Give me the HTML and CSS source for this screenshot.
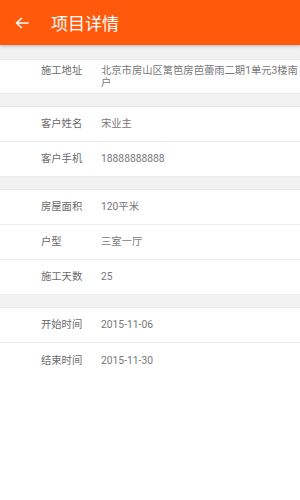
FILE: index.html
```html
<!DOCTYPE html>
<html lang="zh">
<head>
  <meta charset="UTF-8">
  <meta name="viewport" content="width=device-width, initial-scale=1.0">
  <title>项目详情</title>
  <link rel="stylesheet" href="styles.css">
</head>
<body>
  <header class="bar">
    <svg class="back" width="14" height="12" viewBox="0 0 14 12">
      <path d="M13 6H1.5M6.5 1.2L1.5 6l5 4.8" fill="none" stroke="#fff" stroke-width="1.5" stroke-linecap="round" stroke-linejoin="round"/>
    </svg>
    <h1>项目详情</h1>
  </header>

  <main>
    <div class="gap top"></div>
    <section class="group">
      <div class="row multi"><span class="label">施工地址</span><span class="value">北京市房山区篱笆房芭蕾雨二期1单元3楼南户</span></div>
    </section>

    <div class="gap"></div>
    <section class="group">
      <div class="row"><span class="label">客户姓名</span><span class="value">宋业主</span></div>
      <div class="row"><span class="label">客户手机</span><span class="value">18888888888</span></div>
    </section>

    <div class="gap"></div>
    <section class="group">
      <div class="row"><span class="label">房屋面积</span><span class="value">120平米</span></div>
      <div class="row"><span class="label">户型</span><span class="value">三室一厅</span></div>
      <div class="row"><span class="label">施工天数</span><span class="value">25</span></div>
    </section>

    <div class="gap"></div>
    <section class="group">
      <div class="row"><span class="label">开始时间</span><span class="value">2015-11-06</span></div>
      <div class="row last"><span class="label">结束时间</span><span class="value">2015-11-30</span></div>
    </section>
  </main>
</body>
</html>
```

FILE: styles.css
```css
*, *::before, *::after { box-sizing: border-box; margin: 0; padding: 0; }
body { font-family: Roboto, "Noto Sans CJK SC", sans-serif; background: #fff; color: #666; width: 300px; }

.bar { height: 45px; background: #ff5a0c; display: flex; align-items: center; padding-left: 15px; position: relative; z-index: 1; box-shadow: 0 1px 3px rgba(0,0,0,0.25); }
.back { display: block; margin-top: 1px; }
.bar h1 { color: #fff; font-size: 17px; font-weight: normal; margin-left: 22px; }

.gap { height: 13px; background: #f2f2f2; border-bottom: 1px solid #e8e8e8; }
.gap.top { height: 15px; background: #f0f0f0; }

.row { display: flex; align-items: center; min-height: 35px; border-bottom: 1px solid #ececec; font-size: 10.3px; line-height: 12px; }
.row.multi { align-items: flex-start; min-height: 33px; padding: 5px 0 4px; }
.row.last { border-bottom: none; }
.label { width: 101px; flex-shrink: 0; padding-left: 41px; color: #6a6a6a; }
.value { flex: 1; color: #777; }
```
